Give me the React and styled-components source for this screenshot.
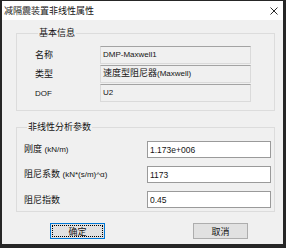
import React from "react";
import styled, { createGlobalStyle } from "styled-components";

const Global = createGlobalStyle`
  html, body { margin: 0; padding: 0; background: #1f1f1f; }
  body { width: 286px; height: 248px; overflow: hidden; }
  * { box-sizing: border-box; }
`;

const CJK = `"Liberation Sans", "Noto Sans CJK SC", sans-serif`;

const Window = styled.div`
  width: 286px;
  height: 248px;
  border-style: solid;
  border-color: #262626;
  border-width: 1px 3px 4px 2px;
  display: flex;
  flex-direction: column;
  font-family: ${CJK};
  color: #141414;
`;

const TitleBar = styled.div`
  height: 19px;
  flex: none;
  background: #ffffff;
  display: flex;
  align-items: center;
  justify-content: space-between;
  padding: 0 5px 0 2px;
  font-size: 9px;
`;

const Body = styled.div`
  flex: 1;
  background: #f0f0f0;
  padding: 7px 8px 0 14px;
  display: flex;
  flex-direction: column;
`;

const Group = styled.fieldset`
  margin: 0 0 ${(p) => p.$mb}px 0;
  padding: ${(p) => p.$pad};
  border: 1px solid #dcdcdc;
  min-width: 0;
  display: grid;
  grid-template-columns: ${(p) => p.$cols};
  row-gap: ${(p) => p.$gap}px;
  align-items: center;
`;

const Legend = styled.legend`
  font-size: 9px;
  line-height: 12px;
  padding: 0 1px;
  margin-left: 3px;
`;

const Label = styled.div`
  font-size: 9px;
  line-height: 12px;
  white-space: nowrap;
`;

const Small = styled.span`
  font-size: 8px;
`;

const ReadField = styled.div`
  height: 18px;
  background: #f0f0f0;
  border: 1px solid #dadada;
  border-top-color: #a3a3a3;
  padding: 1px 2px 0;
  font-size: 9px;
  line-height: 12px;
  white-space: nowrap;
  overflow: hidden;
`;

const Input = styled.input`
  height: 17px;
  width: 100%;
  border: 1px solid #9a9a9a;
  background: #ffffff;
  padding: 0 2px;
  margin: 0;
  font-family: "Liberation Sans", sans-serif;
  font-size: 8.5px;
  color: #141414;
  outline: none;
`;

const Buttons = styled.div`
  display: flex;
  gap: 88px;
  padding-left: 34px;
`;

const Button = styled.button`
  width: 55px;
  height: 16px;
  margin: 0;
  padding: 0;
  font-family: ${CJK};
  font-size: 9px;
  color: #141414;
  background: #e1e1e1;
  border: 1px solid ${(p) => (p.$focused ? "#0078d7" : "#adadad")};
  outline: ${(p) => (p.$focused ? "1px dotted #000" : "none")};
  outline-offset: -3px;
  display: flex;
  align-items: center;
  justify-content: center;
`;

const CloseIcon = () => (
  <svg width="8" height="8" viewBox="0 0 8 8">
    <path d="M0.5 0.5 L7.5 7.5 M7.5 0.5 L0.5 7.5" stroke="#2a2a2a" strokeWidth="1" />
  </svg>
);

export default function App() {
  return (
    <>
      <Global />
      <Window>
        <TitleBar>
          <span>减隔震装置非线性属性</span>
          <CloseIcon />
        </TitleBar>
        <Body>
          <Group $mb={10} $pad="7px 23px 8px 18px" $cols="65px 1fr" $gap={1}>
            <Legend>基本信息</Legend>
            <Label>名称</Label>
            <ReadField><Small>DMP-Maxwell1</Small></ReadField>
            <Label>类型</Label>
            <ReadField>速度型阻尼器<Small>(Maxwell)</Small></ReadField>
            <Label><Small>DOF</Small></Label>
            <ReadField><Small>U2</Small></ReadField>
          </Group>
          <Group $mb={11} $pad="8px 3px 3px 7px" $cols="123px 1fr" $gap={8}>
            <Legend>非线性分析参数</Legend>
            <Label>刚度 <Small>(kN/m)</Small></Label>
            <Input readOnly value="1.173e+006" />
            <Label>阻尼系数 <Small>(kN*(s/m)^α)</Small></Label>
            <Input readOnly value="1173" />
            <Label>阻尼指数</Label>
            <Input readOnly value="0.45" />
          </Group>
          <Buttons>
            <Button $focused>确定</Button>
            <Button>取消</Button>
          </Buttons>
        </Body>
      </Window>
    </>
  );
}
